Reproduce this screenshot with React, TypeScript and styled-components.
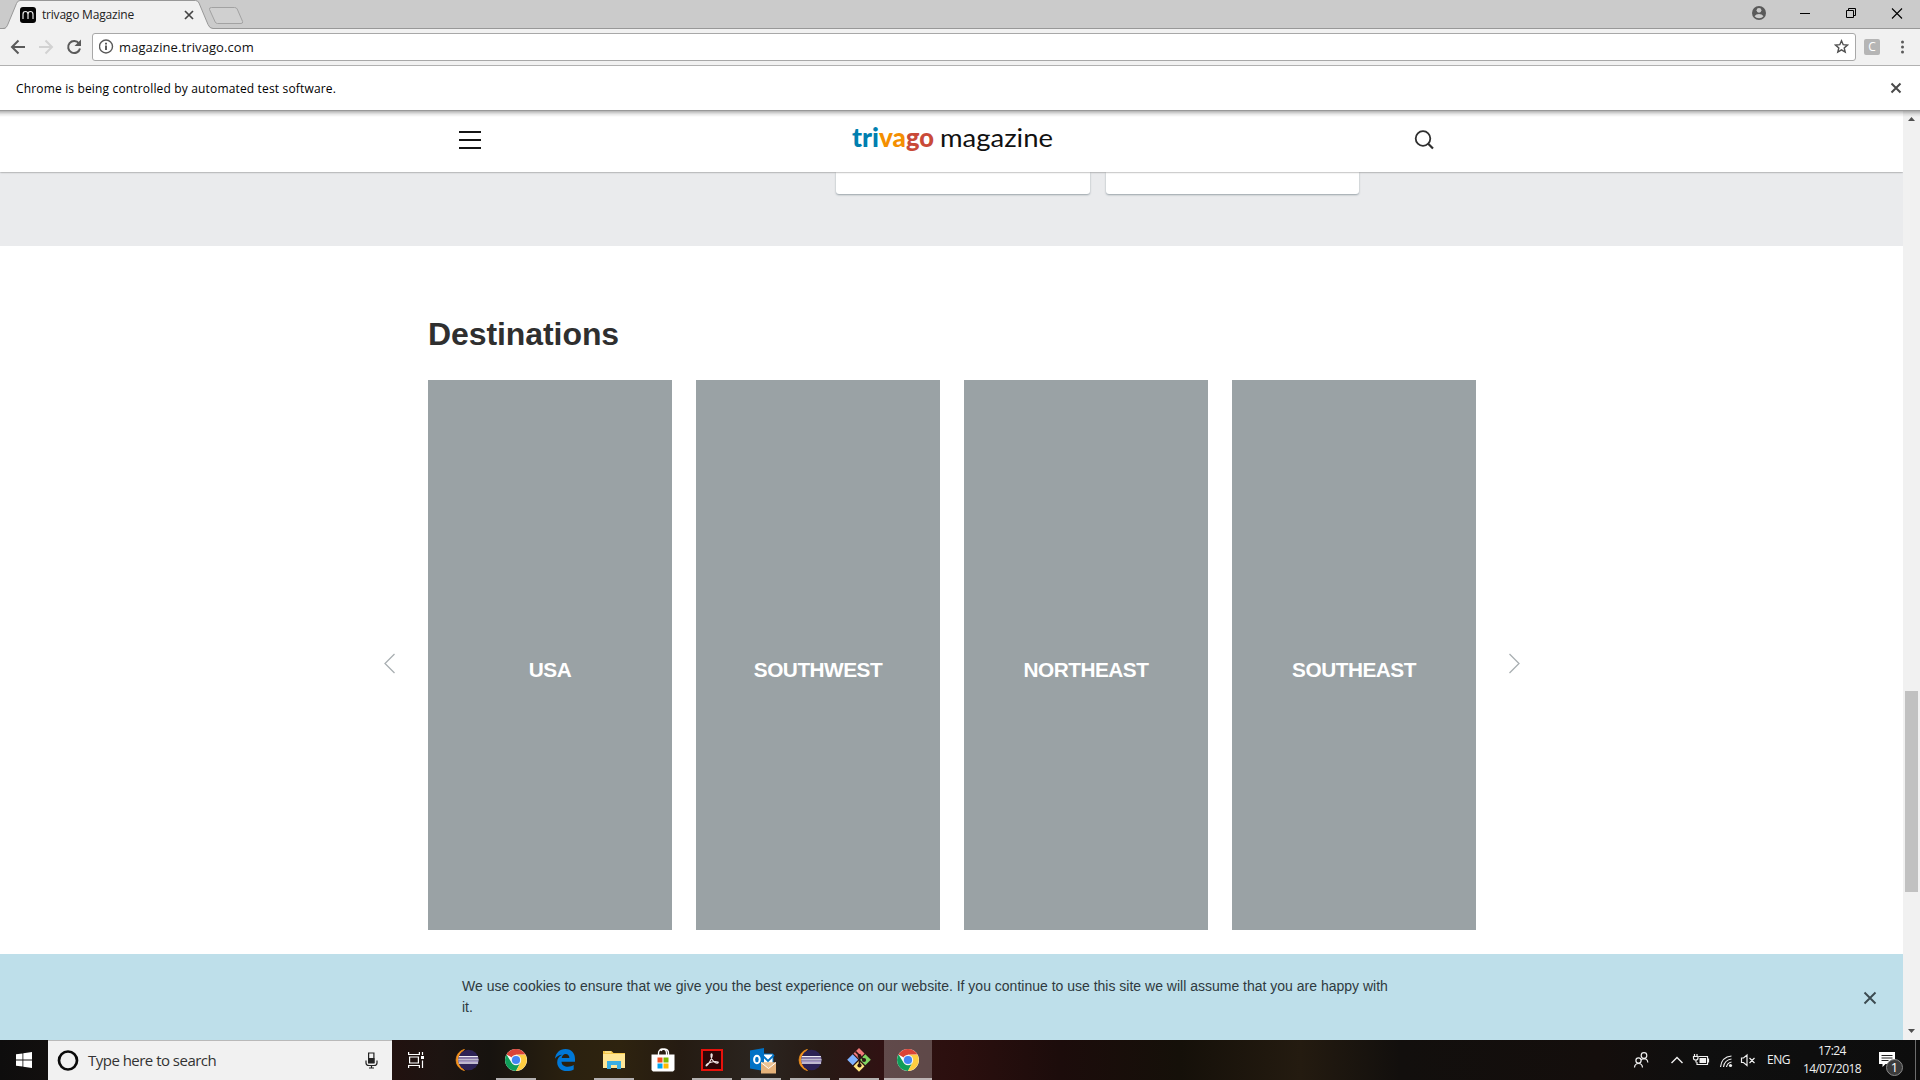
import React from "react";
import styled, { createGlobalStyle } from "styled-components";

const Global = createGlobalStyle`
  * { box-sizing: border-box; }
  html, body { margin: 0; padding: 0; overflow: hidden; }
`;

const ui = `"Open Sans", "Noto Sans", sans-serif`;
const arial = `"Liberation Sans", Arial, sans-serif`;

const Screen = styled.div`
  width: 1920px;
  height: 1080px;
  display: flex;
  flex-direction: column;
  overflow: hidden;
  background: #fff;
  font-family: ${ui};
`;

/* ---------- browser chrome ---------- */

const TabStrip = styled.div`
  height: 29px;
  display: flex;
  background: linear-gradient(#cbcbcb 28px, #989898 28px);
`;
const Tab = styled.div`
  position: relative;
  width: 213px;
  height: 29px;
  display: flex;
  align-items: flex-start;
  padding: 7px 0 0 20px;
`;
const TabShape = styled.svg`
  position: absolute;
  left: 0;
  top: 0;
`;
const Favicon = styled.svg`
  position: relative;
  display: block;
`;
const TabTitle = styled.span`
  position: relative;
  margin-left: 6px;
  width: 142px;
  font-size: 12px;
  line-height: 16px;
  letter-spacing: -0.2px;
  color: #222;
  white-space: nowrap;
`;
const TabClose = styled.svg`
  position: relative;
  display: block;
  margin-top: 3px;
`;
const NewTab = styled.svg`
  display: block;
  margin-left: -6px;
`;
const WindowControls = styled.div`
  margin-left: auto;
  display: flex;
  height: 28px;
`;

const Toolbar = styled.div`
  height: 37px;
  display: flex;
  align-items: center;
  background: #f1f1f1;
  border-bottom: 1px solid #b1b1b1;
`;
const NavIcons = styled.svg`
  display: block;
  width: 92px;
  height: 36px;
`;
const AddressBar = styled.div`
  width: 1764px;
  height: 28px;
  margin-top: -1px;
  display: flex;
  align-items: center;
  padding: 0 6px;
  background: #fff;
  border: 1px solid #a8a8a8;
  border-radius: 3px;
`;
const Url = styled.span`
  margin-left: 5px;
  flex: 1;
  font-size: 13px;
  line-height: 18px;
  letter-spacing: 0.1px;
  color: #111;
`;
const Extension = styled.div`
  width: 16px;
  height: 16px;
  margin-left: 8px;
  border-radius: 2px;
  background: #b5b5b5;
  color: #fff;
  font-size: 12px;
  line-height: 16px;
  text-align: center;
`;
const MenuDots = styled.svg`
  display: block;
  margin-left: 16px;
`;

const InfoBar = styled.div`
  height: 45px;
  display: flex;
  align-items: center;
  justify-content: space-between;
  padding: 0 18px 0 16px;
  background: #fff;
  border-bottom: 1px solid #989898;
`;
const InfoText = styled.span`
  margin-top: 2px;
  font-size: 12px;
  line-height: 16px;
  letter-spacing: 0.16px;
  color: #000;
`;

/* ---------- page ---------- */

const Viewport = styled.div`
  position: relative;
  flex: 1;
  min-height: 0;
  display: flex;
`;
const TopShadow = styled.div`
  position: absolute;
  z-index: 2;
  left: 0;
  right: 0;
  top: 0;
  height: 6px;
  background: linear-gradient(rgba(0, 0, 0, 0.3), rgba(0, 0, 0, 0.09) 55%, rgba(0, 0, 0, 0));
`;
const Page = styled.div`
  width: 1903px;
  display: flex;
  flex-direction: column;
  overflow: hidden;
`;
const SiteHeader = styled.header`
  position: relative;
  height: 61px;
  flex: none;
  display: flex;
  justify-content: space-between;
  padding: 0 469px 0 459px;
  background: #fff;
  box-shadow: 0 0 2px rgba(0, 0, 0, 0.6);
`;
const HeaderIcon = styled.svg`
  display: block;
  margin-top: 18px;
`;
const Logo = styled.svg`
  display: block;
  margin-left: 6px;
`;
const GreyBand = styled.section`
  height: 74px;
  flex: none;
  display: flex;
  gap: 16px;
  padding-left: 836px;
  background: #eaebed;
`;
const CardEnd = styled.div`
  width: 253.6px;
  height: 22px;
  background: #fff;
  border-radius: 0 0 3px 3px;
  box-shadow: 0 1px 2px #98a2a8;
`;
const Destinations = styled.section`
  flex: 1;
  padding: 71px 0 0 376px;
`;
const Title = styled.h2`
  margin: 0 0 29px 52px;
  font: bold 32px/34px ${arial};
  letter-spacing: -0.08px;
  color: #2f2f2f;
`;
const Carousel = styled.div`
  display: flex;
  align-items: center;
`;
const Arrow = styled.svg`
  display: block;
  width: 28px;
  height: 26px;
  margin-top: 18px;
`;
const Tiles = styled.div`
  display: flex;
  gap: 24px;
  margin: 0 24px;
`;
const Tile = styled.a`
  width: 244px;
  height: 550px;
  display: flex;
  align-items: center;
  justify-content: center;
  padding-top: 30px;
  background: #9aa2a5;
  color: #fff;
  font: bold 20.8px/24px ${arial};
  letter-spacing: -0.5px;
`;
const CookieBar = styled.aside`
  height: 86px;
  flex: none;
  display: flex;
  justify-content: space-between;
  padding: 22px 26px 0 462px;
  background: #bedfea;
`;
const CookieText = styled.p`
  margin: 0;
  width: 940px;
  font: 14px/21px ${arial};
  color: #2f3a40;
`;
const CookieClose = styled.svg`
  display: block;
  margin-top: 15px;
`;

const Scrollbar = styled.div`
  width: 17px;
  display: flex;
  flex-direction: column;
  align-items: center;
  background: #f1f1f1;
`;
const ScrollArrow = styled.svg`
  display: block;
  width: 17px;
  height: 17px;
`;
const Thumb = styled.div`
  width: 13px;
  height: 201px;
  margin: 563px 0 131px;
  background: #c1c1c1;
`;

/* ---------- task bar ---------- */

const Taskbar = styled.div`
  height: 40px;
  flex: none;
  display: flex;
  background: linear-gradient(
    90deg,
    #0e0d0d 0, #120f0e 48px, #21110f 392px, #1d1411 440px, #17130f 490px, #2b210f 570px,
    #2e230f 620px, #251b12 680px, #2b2520 760px, #271a15 820px, #301213 880px, #2b0f0e 960px,
    #1c0c0b 1060px, #151009 1180px, #241b10 1300px, #120f0d 1400px, #140e0c 1600px, #0f0f0f 1700px, #0d0d0d 1920px
  );
`;
const StartButton = styled.div`
  width: 48px;
  display: flex;
  align-items: center;
  justify-content: center;
`;
const SearchBox = styled.div`
  width: 344px;
  display: flex;
  align-items: center;
  padding: 0 14px 0 9px;
  background: #f1f1f1;
  border-top: 1px solid #b9b9b9;
`;
const SearchText = styled.span`
  flex: 1;
  margin: -1px 0 0 9px;
  font-size: 15px;
  line-height: 20px;
  letter-spacing: -0.52px;
  color: #333;
`;
const Apps = styled.div`
  display: flex;
  gap: 1px;
`;
const TaskButton = styled.div<{ $running?: boolean; $active?: boolean; $first?: boolean }>`
  width: 48px;
  height: 40px;
  margin-right: ${(p) => (p.$first ? "2px" : "0")};
  display: flex;
  align-items: center;
  justify-content: center;
  background: ${(p) =>
    p.$active
      ? "linear-gradient(transparent 38px, #bdb4b5 38px), rgba(255,255,255,0.24)"
      : p.$running
      ? "linear-gradient(#b3b0b0, #b3b0b0) 4px 38px / 40px 2px no-repeat"
      : "none"};
`;
const Tray = styled.div`
  margin-left: auto;
  display: flex;
  align-items: center;
`;
const TrayIcons = styled.svg`
  display: block;
  width: 136px;
  height: 40px;
`;
const Lang = styled.span`
  width: 35px;
  font-size: 12px;
  line-height: 16px;
  letter-spacing: -0.5px;
  color: #f0f0f0;
`;
const Clock = styled.div`
  width: 60px;
  display: flex;
  flex-direction: column;
  align-items: center;
  font-size: 12px;
  line-height: 18px;
  letter-spacing: -0.55px;
  color: #f0f0f0;
  white-space: nowrap;
`;
const Notifications = styled.svg`
  display: block;
  margin-left: 14px;
`;
const ShowDesktop = styled.div`
  width: 5px;
  height: 40px;
  border-left: 1px solid #6c6c6c;
`;

/* ---------- drawings ---------- */

const ChromeIcon = () => (
  <svg width="22" height="22" viewBox="0 0 22 22">
    <circle cx="11" cy="11" r="11" fill="#fff" />
    <path d="M11 11 L1.5 5.5 A11 11 0 0 1 20.5 5.5 L11 5.8Z" fill="#db4437" />
    <path d="M1.5 5.5 A11 11 0 0 0 11 22 L15.5 13.6 L11 11 L6.5 13.6Z" fill="#0f9d58" />
    <path d="M20.5 5.8 A11 11 0 0 1 11 22 L15.6 13.6 L11 5.8Z" fill="#ffcd40" />
    <circle cx="11" cy="11" r="5.2" fill="#f4f4f4" />
    <circle cx="11" cy="11" r="4.1" fill="#4285f4" />
  </svg>
);
const EclipseIcon = () => (
  <svg width="24" height="22" viewBox="0 0 24 22">
    <path d="M9.500.300A11 11 0 0 0 9.500 21.700Q3.500 17 3.500 11T9.500.300Z" fill="#f7941e" stroke="#f7941e" strokeWidth=".7" />
    <circle cx="13.400" cy="11" r="10.300" fill="#2c2255" />
    <path d="M3.900 7.600h19M3.200 10.800h20.400M3.700 14h19.400" stroke="#efecf6" strokeWidth="1.300" />
    <path d="M3.300 9.200h20M3.300 12.400h20" stroke="#a596c5" strokeWidth="1.300" />
  </svg>
);
const EdgeIcon = () => (
  <svg width="20" height="22" viewBox="0 0 20 22">
    <path
      d="M0 9.7C.6 4 4.6 0 10.5 0 16.700 0 20 4.500 20 10v2.700H6.500c.2 3.600 3.200 5 6.300 5 2.200 0 4.200-.7 5.900-1.700v4.400C17 21.400 14.700 22 12 22 6 22 2.200 18.500 2.200 13.200c0-3.500 1.800-6.200 5-7.500C4 5.900 1.500 7.300 0 9.700ZM6.700 9h7.700c0-2.300-1.300-4-3.800-4C8.400 5 7 6.700 6.700 9Z"
      fill="#0078d7"
    />
  </svg>
);
const ExplorerIcon = () => (
  <svg width="22" height="18" viewBox="0 0 22 18">
    <path d="M0 0h8.500l2 2H22v15H0Z" fill="#f5c84c" />
    <path d="M0 3h22v14H0Z" fill="#ffe695" />
    <path d="M2 1h6" stroke="#fff3b8" />
    <path d="M4 18v-8h14v8h-4v-4H8v4Z" fill="#3aaee2" />
  </svg>
);
const StoreSvg = styled.svg`
  margin-left: -1px;
`;
const StoreIcon = () => (
  <StoreSvg width="24" height="24" viewBox="0 0 24 24">
    <path d="M7.500 8V5a4 4 0 0 1 8 0v3M10 3a4 4 0 0 1 7.500 2v3" fill="none" stroke="#fff" strokeWidth="1.300" />
    <path d="M.5 6.500h23V22L22 23.500H2L.5 22Z" fill="#fff" />
    <path d="M6.500 9.500h5v5h-5Z" fill="#f25022" />
    <path d="M12.500 9.500h5v5h-5Z" fill="#7fba00" />
    <path d="M6.500 15.500h5v5h-5Z" fill="#00a4ef" />
    <path d="M12.500 15.500h5v5h-5Z" fill="#ffb900" />
  </StoreSvg>
);
const AcrobatIcon = () => (
  <svg width="22" height="22" viewBox="0 0 22 22">
    <path d="M1 1h20v20H1Z" fill="#2b0607" stroke="#e8120c" strokeWidth="2" />
    <path
      d="M5 16.500C6 14 13 11.500 17 13c1 .8-1 1.500-2.500.8C12 12.500 9.500 9 10 5.500c.3-1.200 1.400-.6 1.200 1C10.800 9.500 8 15 6 16.500c-.6.5-1.200.4-1 0Z"
      fill="none"
      stroke="#f3e9e9"
      strokeWidth="1.100"
    />
  </svg>
);
const OutlookSvg = styled.svg`
  margin: 2px 0 0 3px;
`;
const OutlookIcon = () => (
  <OutlookSvg width="26" height="26" viewBox="0 0 26 26">
    <path d="M12 6h11v12H12Z" fill="#fff" stroke="#0072c6" />
    <path d="M13 8l5 5 6-6" fill="none" stroke="#0072c6" strokeWidth="1.800" />
    <path d="M0 2.500 14 0v23L0 20.500Z" fill="#0072c6" />
    <ellipse cx="6.900" cy="11.500" rx="2.800" ry="3.700" fill="none" stroke="#fff" strokeWidth="2" />
    <path d="M11 14.500h15v11H11Z" fill="#e6b27a" />
    <path d="M11 14.500l7.500 6 7.500-6" fill="#edc394" stroke="#fff" strokeWidth="1" />
  </OutlookSvg>
);
const GitIcon = () => (
  <svg width="24" height="24" viewBox="0 0 24 24">
    <path d="M12 0l5.500 5.500L12 11 6.500 5.500Z" fill="#f07a7a" />
    <path d="M5.700 6.300l5.500 5.500-5.500 5.500L.2 11.800Z" fill="#80b3ff" />
    <path d="M18.300 6.300l5.500 5.500-5.500 5.500-5.500-5.500Z" fill="#80d562" />
    <path d="M12 12.700l5.500 5.500-5.500 5.500-5.500-5.500Z" fill="#ffe680" />
    <path d="M8.500 3.500 17 12M12.500 7v12" stroke="#2b1613" strokeWidth="1.700" />
    <circle cx="12.500" cy="8" r="1.900" fill="#2b1613" />
    <circle cx="17" cy="12" r="2.100" fill="#2b1613" />
    <circle cx="12.500" cy="17.500" r="2.100" fill="#2b1613" />
  </svg>
);
const TaskViewIcon = () => (
  <svg width="17" height="16" viewBox="0 0 17 16" fill="none" stroke="#fff" strokeWidth="1.200">
    <path d="M.6 0v2.500h10.800V0M.6 16v-2.500h10.800V16M1.600 5h8.800v6H1.600ZM14.500 0v3M14.500 8.500V16" />
    <path d="M13 4h3v3h-3Z" fill="#fff" stroke="none" />
  </svg>
);

const apps = [
  { icon: <TaskViewIcon />, first: true },
  { icon: <EclipseIcon /> },
  { icon: <ChromeIcon />, running: true },
  { icon: <EdgeIcon /> },
  { icon: <ExplorerIcon />, running: true },
  { icon: <StoreIcon /> },
  { icon: <AcrobatIcon />, running: true },
  { icon: <OutlookIcon />, running: true },
  { icon: <EclipseIcon />, running: true },
  { icon: <GitIcon />, running: true },
  { icon: <ChromeIcon />, active: true },
];

const destinations = ["USA", "SOUTHWEST", "NORTHEAST", "SOUTHEAST"];

export default function App() {
  return (
    <Screen>
      <Global />
      <TabStrip>
        <Tab>
          <TabShape width="213" height="29">
            <path d="M4 29 C6.500 28 7 26.500 8 24L16.500 3.500Q17.500.5 20 .5H195.500Q198 .5 199 3L208 24.500Q209.500 28.500 213 28.500V29Z" fill="#f1f1f1" />
            <path d="M0 28.500H3C6 28.500 7 26.500 8 24L16.500 3.500Q17.500.5 20 .5H195.500Q198 .5 199 3L208 24.500Q209.500 28.500 213 28.500" fill="none" stroke="#989898" />
          </TabShape>
          <Favicon width="16" height="16">
            <rect width="16" height="16" rx="3" fill="#050505" />
            <path d="M3 12V7.500Q3 4.500 5.500 4.500T8 7.500V12M8 7.500Q8 4.500 10.500 4.500T13 7.500V12" fill="none" stroke="#e9e9e9" strokeWidth="1.200" />
          </Favicon>
          <TabTitle>trivago Magazine</TabTitle>
          <TabClose width="10" height="10">
            <path d="M1 1l8 8M9 1l-8 8" stroke="#454545" strokeWidth="1.700" />
          </TabClose>
        </Tab>
        <NewTab width="40" height="28">
          <path d="M4.500 7.500H27.500Q29.500 7.500 30.200 9L35.600 21.500Q36 23.500 34 23.500H10.500Q9 23.500 8.200 22L2.500 9.500Q2 7.500 4.500 7.500Z" fill="#d0d0d0" stroke="#a2a2a2" />
        </NewTab>
        <WindowControls>
          <svg width="170" height="28">
            <circle cx="9" cy="13" r="7" fill="#5a5a5a" />
            <circle cx="9" cy="10.300" r="2.400" fill="#cbcbcb" />
            <path d="M4.500 16.200Q6 14 9 14t4.500 2.200Q12 18.300 9 18.300T4.500 16.200Z" fill="#cbcbcb" />
            <path d="M50 13.500h10" stroke="#000" />
            <path d="M96.500 10.500h7v7h-7ZM98.500 10.500v-2h7v7h-2" fill="none" stroke="#000" />
            <path d="M142 8.500l10 10M152 8.500l-10 10" stroke="#000" strokeWidth="1.100" />
          </svg>
        </WindowControls>
      </TabStrip>

      <Toolbar>
        <NavIcons viewBox="0 0 92 36" fill="none" strokeWidth="2">
          <path d="M25 18H12M18.500 11.500L12 18l6.500 6.500" stroke="#5a5a5a" />
          <path d="M39 18h13M45.500 11.500L52 18l-6.500 6.500" stroke="#d2d2d2" />
          <path d="M79 14.500A6 6 0 1 0 80 19.500" stroke="#5a5a5a" />
          <path d="M81 10.500v6.500h-6.500Z" fill="#5a5a5a" />
        </NavIcons>
        <AddressBar>
          <svg width="15" height="15" viewBox="0 0 15 15">
            <circle cx="7" cy="7.500" r="6.500" fill="none" stroke="#5a5a5a" strokeWidth="1.400" />
            <path d="M6.100 6.500h1.800V11H6.100ZM6.100 3.800h1.800v1.700H6.100Z" fill="#4a4a4a" />
          </svg>
          <Url>magazine.trivago.com</Url>
          <svg width="15" height="15" viewBox="0 0 15 15">
            <path d="M7.500 1.800l1.700 3.900 4.200.4-3.200 2.800 1 4.200-3.700-2.200-3.700 2.200 1-4.200L1.600 6.100l4.200-.4Z" fill="none" stroke="#4f4f4f" strokeWidth="1.400" />
          </svg>
        </AddressBar>
        <Extension>C</Extension>
        <MenuDots width="12" height="14" fill="#5a5a5a">
          <circle cx="6.500" cy="2" r="1.500" />
          <circle cx="6.500" cy="7" r="1.500" />
          <circle cx="6.500" cy="12" r="1.500" />
        </MenuDots>
      </Toolbar>

      <InfoBar>
        <InfoText>Chrome is being controlled by automated test software.</InfoText>
        <svg width="12" height="12">
          <path d="M1.500 1.500l9 9M10.500 1.500l-9 9" stroke="#4a4a4a" strokeWidth="2" />
        </svg>
      </InfoBar>

      <Viewport>
        <TopShadow />
        <Page>
          <SiteHeader>
            <HeaderIcon width="22" height="22">
              <path d="M0 2.900h22M0 10.900h22M0 18.900h22" stroke="#151515" strokeWidth="2" />
            </HeaderIcon>
            <Logo width="206" height="50" fontFamily="Lato, sans-serif">
              <g fontWeight="900" fontSize="26">
                <text x="4" y="35.500" textLength="27" lengthAdjust="spacingAndGlyphs" fill="#007faf">tri</text>
                <text x="31" y="35.500" textLength="27" lengthAdjust="spacingAndGlyphs" fill="#f48f00">va</text>
                <text x="58" y="35.500" textLength="28" lengthAdjust="spacingAndGlyphs" fill="#c94a38">go</text>
              </g>
              <text x="92" y="35.500" fontSize="25" textLength="113" lengthAdjust="spacingAndGlyphs" fill="#111">magazine</text>
            </Logo>
            <HeaderIcon width="20" height="22" fill="none" stroke="#2f2f2f" strokeWidth="1.800">
              <circle cx="9" cy="9.500" r="7.300" />
              <path d="M14 14.500l5 5" strokeWidth="2.200" />
            </HeaderIcon>
          </SiteHeader>
          <GreyBand>
            <CardEnd />
            <CardEnd />
          </GreyBand>
          <Destinations>
            <Title>Destinations</Title>
            <Carousel>
              <Arrow viewBox="0 0 28 26">
                <path d="M18.500 3L9 12.500 18.500 22" fill="none" stroke="#a9afb2" strokeWidth="1.300" />
              </Arrow>
              <Tiles>
                {destinations.map((name) => (
                  <Tile key={name}>{name}</Tile>
                ))}
              </Tiles>
              <Arrow viewBox="0 0 28 26">
                <path d="M9.500 3L19 12.500 9.500 22" fill="none" stroke="#a9afb2" strokeWidth="1.300" />
              </Arrow>
            </Carousel>
          </Destinations>
          <CookieBar>
            <CookieText>
              We use cookies to ensure that we give you the best experience on our website. If you continue to use this site we will assume that you are happy with it.
            </CookieText>
            <CookieClose width="14" height="14">
              <path d="M1.500 1.500l11 11M12.500 1.500l-11 11" stroke="#3b4a50" strokeWidth="1.900" />
            </CookieClose>
          </CookieBar>
        </Page>
        <Scrollbar>
          <ScrollArrow>
            <path d="M5 10l3.500-4L12 10Z" fill="#505050" />
          </ScrollArrow>
          <Thumb />
          <ScrollArrow>
            <path d="M5 6l3.500 4L12 6Z" fill="#505050" />
          </ScrollArrow>
        </Scrollbar>
      </Viewport>

      <Taskbar>
        <StartButton>
          <svg width="16" height="16" fill="#fff">
            <path d="M0 2.300L6.500 1.400V7.500H0ZM7.300 1.300L16 0V7.500H7.300ZM0 8.400H6.500V14.600L0 13.700ZM7.300 8.400H16V16L7.300 14.700Z" />
          </svg>
        </StartButton>
        <SearchBox>
          <svg width="22" height="22">
            <circle cx="11" cy="10.500" r="9" fill="none" stroke="#0a0a0a" strokeWidth="2.700" />
          </svg>
          <SearchText>Type here to search</SearchText>
          <svg width="13" height="17" fill="none" stroke="#222" strokeWidth="1.200">
            <path d="M3.600 1h5.300v9.500H3.600Z" />
            <path d="M3.600 6.500h5.300v4.500H3.600Z" fill="#222" />
            <path d="M1 8.500V11Q1 13.500 4 13.500H9Q12 13.500 12 11V8.500M6.500 13.500V16M4 16h5" />
          </svg>
        </SearchBox>
        <Apps>
          {apps.map((a, i) => (
            <TaskButton key={i} $running={a.running} $active={a.active} $first={a.first}>
              {a.icon}
            </TaskButton>
          ))}
        </Apps>
        <Tray>
          <TrayIcons viewBox="1631 0 136 40" fill="none" stroke="#f0f0f0" strokeWidth="1.200">
            <circle cx="1638.500" cy="20.500" r="2.600" />
            <path d="M1634.500 27.500Q1634.800 23.500 1638.500 23.500T1642.500 27.500" />
            <circle cx="1644" cy="15.500" r="2.800" />
            <path d="M1641 20.300Q1642 18.700 1644 18.700 1647.500 18.800 1647.800 22.500" />
            <path d="M1671.500 23l5.500-5.500 5.500 5.500" strokeWidth="1.400" />
            <path d="M1698.500 16.500h9v8h-10.500v-2.500" />
            <path d="M1699.500 18h6.500v5h-6.500Z" fill="#f0f0f0" stroke="none" />
            <path d="M1708.500 18.500v4M1694.500 14v2.500M1697 14v2.500M1693.500 16.500h4.500v1.500q0 2-2.300 2t-2.200-2ZM1696 20v2.500" />
            <path d="M1720.500 27Q1721.500 17 1731.500 16M1723.500 27Q1724.500 20 1731.500 19M1726.500 27Q1727.300 22.800 1731.500 22" />
            <circle cx="1730.500" cy="25.500" r="1.600" fill="#f0f0f0" stroke="none" />
            <path d="M1741.500 18v4.500h2l3.500 3v-10.500l-3.500 3ZM1749.500 18l5 5M1754.500 18l-5 5" />
          </TrayIcons>
          <Lang>ENG</Lang>
          <Clock>
            <span>17:24</span>
            <span>14/07/2018</span>
          </Clock>
          <Notifications width="39" height="40">
            <path d="M3 12h16v12H9.500L6.500 27v-3H3Z" fill="#fff" />
            <path d="M5.500 15.500h11M5.500 18h11M5.500 20.500h7" stroke="#222" />
            <circle cx="18.500" cy="27.500" r="8" fill="#3b3b3b" stroke="#8a8a8a" />
            <text x="18.500" y="32" textAnchor="middle" fontSize="13" fill="#fff" fontFamily="Open Sans, sans-serif">1</text>
          </Notifications>
          <ShowDesktop />
        </Tray>
      </Taskbar>
    </Screen>
  );
}
